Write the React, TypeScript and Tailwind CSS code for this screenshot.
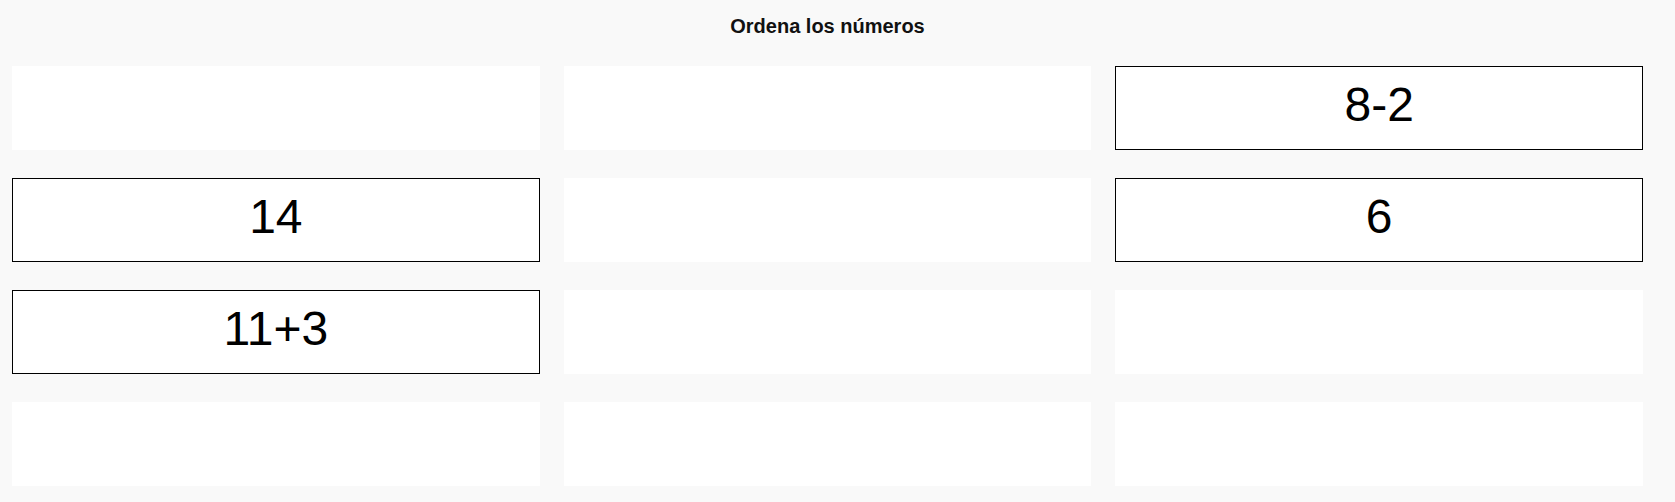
import React from "react";

const cells: (string | null)[] = [
  null, null, "8-2",
  "14", null, "6",
  "11+3", null, null,
  null, null, null,
];

export default function App() {
  return (
    <div
      className="w-[1675px] h-[502px] bg-[#f9f9f9] overflow-hidden"
      style={{ fontFamily: '"Liberation Sans", Arial, sans-serif' }}
    >
      <div className="w-[1655px] px-[12px]">
        <div className="h-[66px] pt-[15px] text-center text-[20px] font-bold leading-[22px] text-[#111]">
          Ordena los números
        </div>
        <div className="grid grid-cols-3 gap-x-[24px] gap-y-[28px]">
          {cells.map((c, i) =>
            c ? (
              <div
                key={i}
                className="h-[84px] pb-[6px] bg-white border border-black flex items-center justify-center text-[48px] text-black"
              >
                {c}
              </div>
            ) : (
              <div key={i} className="h-[84px] bg-white" />
            )
          )}
        </div>
      </div>
    </div>
  );
}
